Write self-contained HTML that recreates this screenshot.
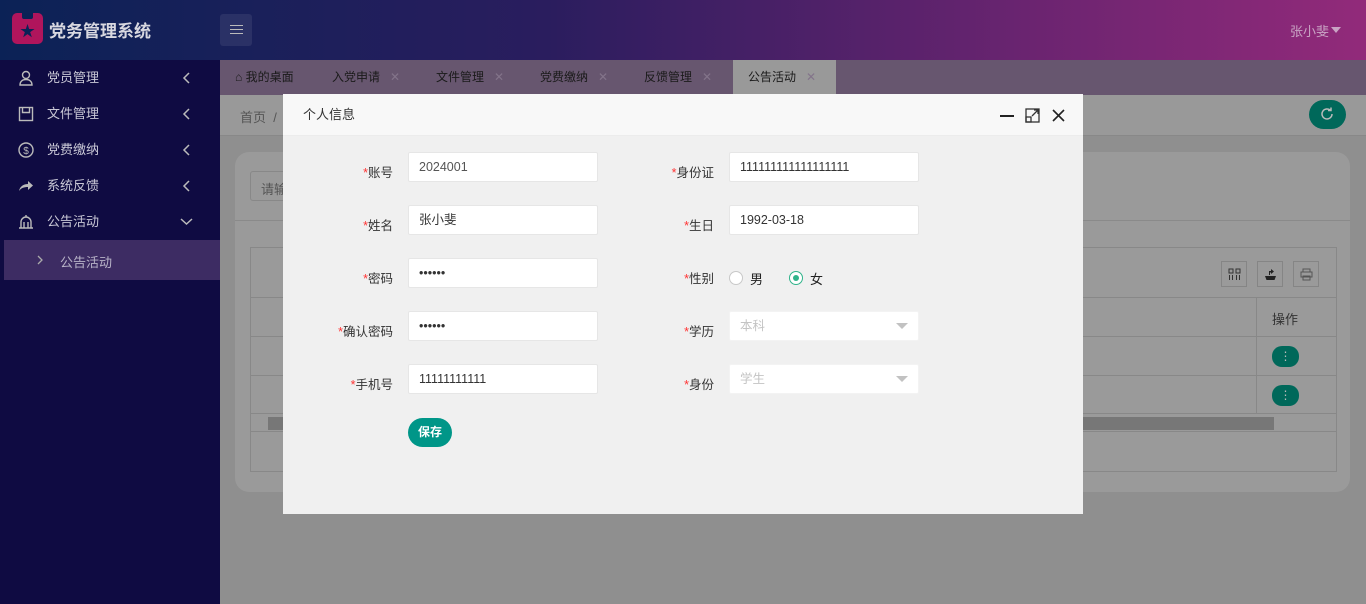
<!DOCTYPE html>
<html><head><meta charset="utf-8"><style>
*{margin:0;padding:0;box-sizing:border-box}
body{width:1366px;height:604px;overflow:hidden;font-family:"Liberation Sans","Noto Sans CJK SC",sans-serif;font-size:13px;position:relative;background:#8f8f8f}
.abs{position:absolute}
.hdr{left:0;top:0;width:1366px;height:60px;background:linear-gradient(90deg,#0b2256 0%,#2a1d5e 40%,#6a2470 75%,#922a7a 100%)}
.side{left:0;top:60px;width:220px;height:544px;background:#0f0b42}
.mi{position:absolute;left:0;width:220px;height:36px;color:#c9c8d6;font-size:13px;line-height:36px}
.mi .t{position:absolute;left:47px}
.mi .ar{position:absolute;left:182px;top:12px}
.tabs{left:220px;top:60px;width:1146px;height:35px;background:#67566f}
.tab{position:absolute;top:0;height:35px;line-height:35px;font-size:12px;color:#1a1a1a}
.tab i{font-style:normal;color:#83748a;margin-left:10px}
.bc{left:220px;top:95px;width:1146px;height:41px;background:#999;border-bottom:1px solid #888}
.modal{left:283px;top:94px;width:800px;height:420px;background:#f0f0f0}
.mh{height:42px;background:#f8f8f8;border-bottom:1px solid #ececec;line-height:42px;padding-left:20px;color:#333;font-size:13px}
.lbl{position:absolute;text-align:right;font-size:12.5px;color:#333;width:120px}
.lbl b{color:#f33;font-weight:normal}
.inp{position:absolute;height:30px;background:#fff;border:1px solid #e6e6e6;border-radius:2px;line-height:28px;padding-left:10px;font-size:12.5px;color:#333}
.ph{color:#c4c4c4}
.tri{position:absolute;right:10px;top:11px;width:0;height:0;border-left:6px solid transparent;border-right:6px solid transparent;border-top:6px solid #c2c2c2}
.tb{position:absolute;top:261px;width:26px;height:26px;border:1px solid #858585}
</style></head><body>
<div class="abs hdr">
  <div class="abs" style="left:12px;top:13px;width:31px;height:31px;background:#b0155c;border-radius:5px"></div>
  <div class="abs" style="left:22px;top:13px;width:11px;height:6px;background:#0b2256;border-radius:0 0 2px 2px"></div>
  <div class="abs" style="left:20px;top:20px;color:#0b2256;font-size:15px">★</div>
  <div class="abs" style="left:49px;top:17px;color:#d8d8e0;font-size:17px;font-weight:bold">党务管理系统</div>
  <div class="abs" style="left:220px;top:14px;width:32px;height:32px;background:rgba(255,255,255,.08);border-radius:3px"></div>
  <div class="abs" style="left:230px;top:25px;width:13px;height:1px;background:#bbb;box-shadow:0 4px 0 #bbb,0 8px 0 #bbb"></div>
  <div class="abs" style="left:1290px;top:21px;color:#c9a4c4;font-size:13px">张小斐</div>
  <div class="abs" style="left:1331px;top:27px;border-left:5px solid transparent;border-right:5px solid transparent;border-top:6px solid #c9a4c4"></div>
</div>
<div class="abs side">
  <div class="mi" style="top:0"><svg class="abs" style="left:18px;top:10px" width="16" height="16" viewBox="0 0 16 16" fill="none" stroke="#bbb" stroke-width="1.4"><circle cx="8" cy="5" r="3.5"/><path d="M2 15c0-4 3-5.5 6-5.5s6 1.5 6 5.5z"/></svg><span class="t">党员管理</span><svg class="ar" width="10" height="12" viewBox="0 0 10 12" fill="none" stroke="#bbb" stroke-width="1.5"><path d="M7 1L2 6l5 5"/></svg></div>
  <div class="mi" style="top:36px"><svg class="abs" style="left:18px;top:10px" width="16" height="16" viewBox="0 0 16 16" fill="none" stroke="#bbb" stroke-width="1.4"><rect x="1.5" y="1.5" width="13" height="13"/><path d="M4.5 1.5v5h7v-5"/></svg><span class="t">文件管理</span><svg class="ar" width="10" height="12" viewBox="0 0 10 12" fill="none" stroke="#bbb" stroke-width="1.5"><path d="M7 1L2 6l5 5"/></svg></div>
  <div class="mi" style="top:72px"><svg class="abs" style="left:18px;top:10px" width="16" height="16" viewBox="0 0 16 16"><circle cx="8" cy="8" r="7" fill="none" stroke="#bbb" stroke-width="1.4"/><text x="8" y="12" font-size="10" text-anchor="middle" fill="#bbb" font-family="Liberation Sans">$</text></svg><span class="t">党费缴纳</span><svg class="ar" width="10" height="12" viewBox="0 0 10 12" fill="none" stroke="#bbb" stroke-width="1.5"><path d="M7 1L2 6l5 5"/></svg></div>
  <div class="mi" style="top:108px"><svg class="abs" style="left:18px;top:10px" width="16" height="16" viewBox="0 0 16 16"><path d="M1 13c1-5 5-7 9-7V3l5 4.5-5 4.5V9c-4 0-7 1-9 4z" fill="#bbb"/></svg><span class="t">系统反馈</span><svg class="ar" width="10" height="12" viewBox="0 0 10 12" fill="none" stroke="#bbb" stroke-width="1.5"><path d="M7 1L2 6l5 5"/></svg></div>
  <div class="mi" style="top:144px"><svg class="abs" style="left:18px;top:10px" width="16" height="16" viewBox="0 0 16 16" fill="none" stroke="#bbb" stroke-width="1.4"><path d="M3 14V8a5 5 0 0110 0v6M1 14h14M8 3V1M6 8v6M10 8v6"/></svg><span class="t">公告活动</span><svg class="abs" style="left:180px;top:13px" width="13" height="9" viewBox="0 0 13 9" fill="none" stroke="#bbb" stroke-width="1.5"><path d="M1 2l5.5 5L12 2"/></svg></div>
  <div class="abs" style="left:4px;top:180px;width:216px;height:40px;background:#3d2c63"></div>
  <svg class="abs" style="left:37px;top:195px" width="6" height="10" viewBox="0 0 6 10" fill="none" stroke="#aaa" stroke-width="1.3"><path d="M1 1l4 4-4 4"/></svg>
  <div class="abs" style="left:60px;top:192px;color:#b9b4c8;font-size:13px">公告活动</div>
</div>
<div class="abs tabs">
  <div class="tab" style="left:15px">⌂ 我的桌面</div>
  <div class="tab" style="left:112px">入党申请<i>✕</i></div>
  <div class="tab" style="left:216px">文件管理<i>✕</i></div>
  <div class="tab" style="left:320px">党费缴纳<i>✕</i></div>
  <div class="tab" style="left:424px">反馈管理<i>✕</i></div>
  <div class="tab" style="left:513px;width:103px;background:#999;padding-left:15px">公告活动<i>✕</i></div>
</div>
<div class="abs bc"><span class="abs" style="left:20px;top:12px;color:#555">首页 &nbsp;/</span>
  <div class="abs" style="left:1089px;top:5px;width:37px;height:29px;background:#00685a;border-radius:15px"></div>
  <svg class="abs" style="left:1099px;top:11px" width="16" height="16" viewBox="0 0 16 16" fill="none" stroke="#bbb" stroke-width="1.5"><path d="M13 8a5 5 0 11-1.5-3.6M12 1.5v3h-3"/></svg></div>
<div class="abs" style="left:235px;top:152px;width:1115px;height:340px;background:#9a9a9a;border-radius:14px"></div>
<div class="abs" style="left:235px;top:220px;width:1115px;height:1px;background:#8a8a8a"></div>
<div class="abs" style="left:250px;top:171px;width:60px;height:30px;border:1px solid #888;border-radius:3px;color:#555;padding:7px 10px">请输</div>
<div class="abs" style="left:250px;top:247px;width:1087px;height:225px;border:1px solid #888"></div>
<div class="abs" style="left:250px;top:297px;width:1087px;height:1px;background:#888;box-shadow:0 39px 0 #888,0 78px 0 #888,0 116px 0 #888,0 134px 0 #888"></div>
<div class="abs" style="left:1256px;top:297px;width:1px;height:116px;background:#888"></div>
<div class="abs" style="left:1272px;top:309px;color:#333">操作</div>
<div class="abs" style="left:1272px;top:346px;width:27px;height:21px;background:#00685a;border-radius:10px;color:#bbb;text-align:center;font-size:12px;line-height:21px">⋮</div>
<div class="abs" style="left:1272px;top:385px;width:27px;height:21px;background:#00685a;border-radius:10px;color:#bbb;text-align:center;font-size:12px;line-height:21px">⋮</div>
<div class="tb" style="left:1221px"><svg class="abs" style="left:6px;top:6px" width="13" height="13" viewBox="0 0 13 13" fill="none" stroke="#333" stroke-width="1"><rect x="1" y="1" width="4" height="4"/><rect x="8" y="1" width="4" height="4"/><path d="M1.5 7v5M4.5 7v5M8.5 7v5M11.5 7v5"/></svg></div>
<div class="tb" style="left:1257px"><svg class="abs" style="left:6px;top:6px" width="13" height="13" viewBox="0 0 13 13"><path d="M1 8h11l-1.5 4h-8z" fill="#222"/><path d="M5 7V3h2V1l3 2.5L7 6V4.5H6V7z" fill="#222"/></svg></div>
<div class="tb" style="left:1293px"><svg class="abs" style="left:6px;top:6px" width="13" height="13" viewBox="0 0 13 13" fill="none" stroke="#555" stroke-width="1"><rect x="3" y="1" width="7" height="3"/><rect x="1" y="4" width="11" height="5"/><rect x="3" y="8" width="7" height="4"/></svg></div>
<div class="abs" style="left:268px;top:417px;width:1006px;height:13px;background:#777"></div>
<div class="abs modal">
  <div class="mh">个人信息</div>
  <div class="abs" style="left:717px;top:21px;width:14px;height:2px;background:#222"></div>
  <svg class="abs" style="left:742px;top:14px" width="15" height="15" viewBox="0 0 15 15" fill="none" stroke="#333" stroke-width="1.3"><rect x="1" y="1" width="13" height="13"/><path d="M7 8l6-6M9 2h4v4"/><rect x="1" y="9" width="5" height="5"/></svg>
  <svg class="abs" style="left:769px;top:15px" width="13" height="13" viewBox="0 0 13 13" stroke="#222" stroke-width="1.6"><path d="M1 1l11 11M12 1L1 12"/></svg>

  <div class="lbl" style="left:-10px;top:68px"><b>*</b>账号</div>
  <div class="inp" style="left:125px;top:58px;width:190px;color:#555">2024001</div>
  <div class="lbl" style="left:-10px;top:121px"><b>*</b>姓名</div>
  <div class="inp" style="left:125px;top:111px;width:190px">张小斐</div>
  <div class="lbl" style="left:-10px;top:174px"><b>*</b>密码</div>
  <div class="inp" style="left:125px;top:164px;width:190px">••••••</div>
  <div class="lbl" style="left:-10px;top:227px"><b>*</b>确认密码</div>
  <div class="inp" style="left:125px;top:217px;width:190px">••••••</div>
  <div class="lbl" style="left:-10px;top:280px"><b>*</b>手机号</div>
  <div class="inp" style="left:125px;top:270px;width:190px">11111111111</div>
  <div class="abs" style="left:125px;top:324px;width:44px;height:29px;background:#009688;border-radius:15px;color:#fff;font-size:12px;font-weight:bold;text-align:center;line-height:29px">保存</div>

  <div class="lbl" style="left:311px;top:68px"><b>*</b>身份证</div>
  <div class="inp" style="left:446px;top:58px;width:190px">111111111111111111</div>
  <div class="lbl" style="left:311px;top:121px"><b>*</b>生日</div>
  <div class="inp" style="left:446px;top:111px;width:190px">1992-03-18</div>
  <div class="lbl" style="left:311px;top:174px"><b>*</b>性别</div>
  <div class="abs" style="left:446px;top:177px;width:14px;height:14px;border:1px solid #c8c8c8;border-radius:50%;background:#fff"></div>
  <div class="abs" style="left:467px;top:175px;font-size:13px;color:#222">男</div>
  <div class="abs" style="left:506px;top:177px;width:14px;height:14px;border:1px solid #2fb38a;border-radius:50%;background:#fff"></div>
  <div class="abs" style="left:510px;top:181px;width:6px;height:6px;border-radius:50%;background:#2fb38a"></div>
  <div class="abs" style="left:527px;top:175px;font-size:13px;color:#222">女</div>
  <div class="lbl" style="left:311px;top:227px"><b>*</b>学历</div>
  <div class="inp ph" style="left:446px;top:217px;width:190px;border-color:#f3f3f3">本科<span class="tri"></span></div>
  <div class="lbl" style="left:311px;top:280px"><b>*</b>身份</div>
  <div class="inp ph" style="left:446px;top:270px;width:190px;border-color:#f3f3f3">学生<span class="tri"></span></div>
</div>
</body></html>
